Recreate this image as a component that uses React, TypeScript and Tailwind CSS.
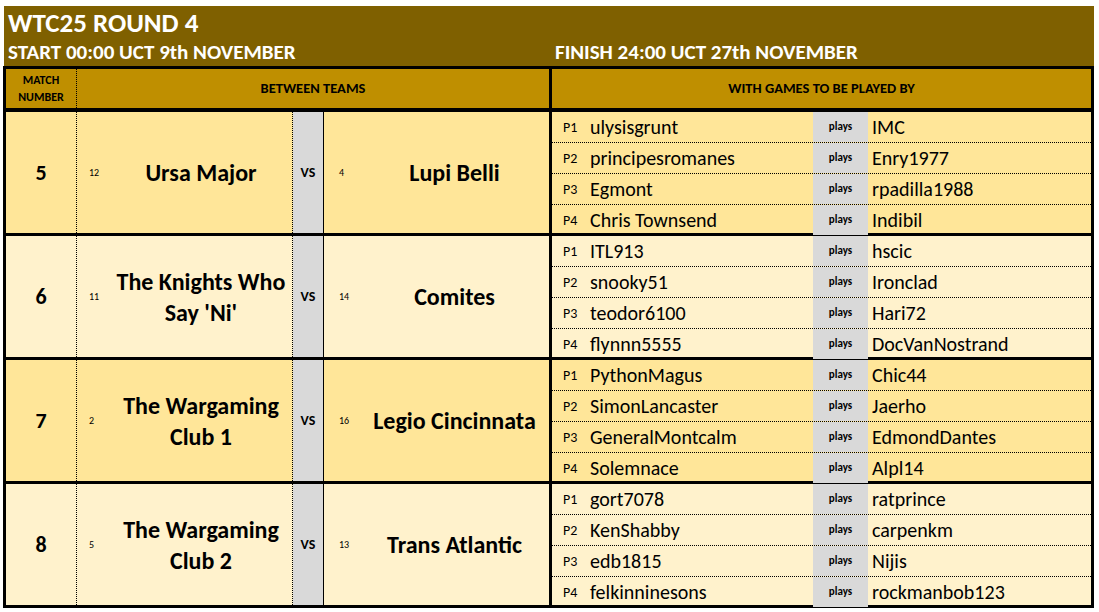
const FONT = "font-['Carlito','Calibri','Lato',sans-serif]";

interface Game {
  p: string;
  home: string;
  away: string;
}

interface Match {
  num: number;
  seedA: number;
  teamA: string;
  seedB: number;
  teamB: string;
  bg: string;
  games: Game[];
}

const matches: Match[] = [
  {
    num: 5,
    seedA: 12,
    teamA: "Ursa Major",
    seedB: 4,
    teamB: "Lupi Belli",
    bg: "bg-[#FFE699]",
    games: [
      { p: "P1", home: "ulysisgrunt", away: "IMC" },
      { p: "P2", home: "principesromanes", away: "Enry1977" },
      { p: "P3", home: "Egmont", away: "rpadilla1988" },
      { p: "P4", home: "Chris Townsend", away: "Indibil" },
    ],
  },
  {
    num: 6,
    seedA: 11,
    teamA: "The Knights Who Say 'Ni'",
    seedB: 14,
    teamB: "Comites",
    bg: "bg-[#FFF2CC]",
    games: [
      { p: "P1", home: "ITL913", away: "hscic" },
      { p: "P2", home: "snooky51", away: "Ironclad" },
      { p: "P3", home: "teodor6100", away: "Hari72" },
      { p: "P4", home: "flynnn5555", away: "DocVanNostrand" },
    ],
  },
  {
    num: 7,
    seedA: 2,
    teamA: "The Wargaming Club 1",
    seedB: 16,
    teamB: "Legio Cincinnata",
    bg: "bg-[#FFE699]",
    games: [
      { p: "P1", home: "PythonMagus", away: "Chic44" },
      { p: "P2", home: "SimonLancaster", away: "Jaerho" },
      { p: "P3", home: "GeneralMontcalm", away: "EdmondDantes" },
      { p: "P4", home: "Solemnace", away: "Alpl14" },
    ],
  },
  {
    num: 8,
    seedA: 5,
    teamA: "The Wargaming Club 2",
    seedB: 13,
    teamB: "Trans Atlantic",
    bg: "bg-[#FFF2CC]",
    games: [
      { p: "P1", home: "gort7078", away: "ratprince" },
      { p: "P2", home: "KenShabby", away: "carpenkm" },
      { p: "P3", home: "edb1815", away: "Nijis" },
      { p: "P4", home: "felkinninesons", away: "rockmanbob123" },
    ],
  },
];

function MatchRow({ m }: { m: Match }) {
  return (
    <div className={`flex h-[124px] ${m.bg} border-b-[3px] border-black`}>
      {/* Match number */}
      <div className="w-[71px] shrink-0 border-r border-dotted border-black flex items-center justify-center">
        <span className="text-[22px] font-bold text-black">{m.num}</span>
      </div>

      {/* Team A */}
      <div className="w-[216px] shrink-0 flex items-center border-r border-dotted border-black">
        <span className="w-[33px] shrink-0 pl-[12px] text-[10px] text-black">{m.seedA}</span>
        <span className="flex-1 text-center text-[24px] leading-[31px] font-bold text-black px-[3px]">
          {m.teamA}
        </span>
      </div>

      {/* vs */}
      <div className="w-[31px] shrink-0 bg-[#D9D9D9] border-r border-black flex items-center justify-center">
        <span className="text-[14px] font-bold text-black">VS</span>
      </div>

      {/* Team B */}
      <div className="w-[228px] shrink-0 flex items-center border-r-[3px] border-black">
        <span className="w-[36px] shrink-0 pl-[15px] text-[10px] text-black">{m.seedB}</span>
        <span className="flex-1 text-center text-[24px] leading-[31px] font-bold text-black">
          {m.teamB}
        </span>
      </div>

      {/* Games */}
      <div className="flex-1 flex flex-col">
        {m.games.map((g, i) => (
          <div
            key={g.p}
            className={`flex ${i < 3 ? "h-[31px] border-b border-dotted border-black" : "flex-1"}`}
          >
            <div className="w-[261px] shrink-0 flex items-center">
              <span className="w-[38px] shrink-0 pl-[11px] text-[14px] text-black">{g.p}</span>
              <span className="text-[20px] text-black">{g.home}</span>
            </div>
            <div className="w-[55px] shrink-0 bg-[#D9D9D9] flex items-center justify-center">
              <span className="text-[11px] font-bold text-black">plays</span>
            </div>
            <div className="flex-1 flex items-center pl-[4px]">
              <span className="text-[20px] text-black">{g.away}</span>
            </div>
          </div>
        ))}
      </div>
    </div>
  );
}

export default function App() {
  return (
    <div className={`w-[1099px] h-[612px] bg-white pt-[6px] pl-[3px] ${FONT}`}>
      <div className="w-[1091px]">
        {/* Title band */}
        <div className="h-[60px] bg-[#7F6000] ml-[1px] text-white font-bold flex flex-col">
          <div className="h-[32px] pl-[4px] flex items-center text-[27px] leading-none">
            WTC25 ROUND 4
          </div>
          <div className="flex-1 flex items-center text-[21px] leading-none">
            <span className="w-[551px] pl-[4px]">START 00:00 UCT 9th NOVEMBER</span>
            <span>FINISH 24:00 UCT 27th NOVEMBER</span>
          </div>
        </div>

        {/* Table */}
        <div className="border-x-[3px] border-t-[3px] border-black">
          <div className="flex h-[43px] bg-[#BF8F00] border-b-[4px] border-black text-black font-bold">
            <div className="w-[71px] shrink-0 border-r border-dotted border-black flex items-center justify-center text-center text-[12px] leading-[17px]">
              MATCH
              <br />
              NUMBER
            </div>
            <div className="w-[475px] shrink-0 border-r-[3px] border-black flex items-center justify-center text-[14.5px]">
              BETWEEN TEAMS
            </div>
            <div className="flex-1 flex items-center justify-center text-[14.5px]">
              WITH GAMES TO BE PLAYED BY
            </div>
          </div>

          {matches.map((m) => (
            <MatchRow key={m.num} m={m} />
          ))}
        </div>
      </div>
    </div>
  );
}
